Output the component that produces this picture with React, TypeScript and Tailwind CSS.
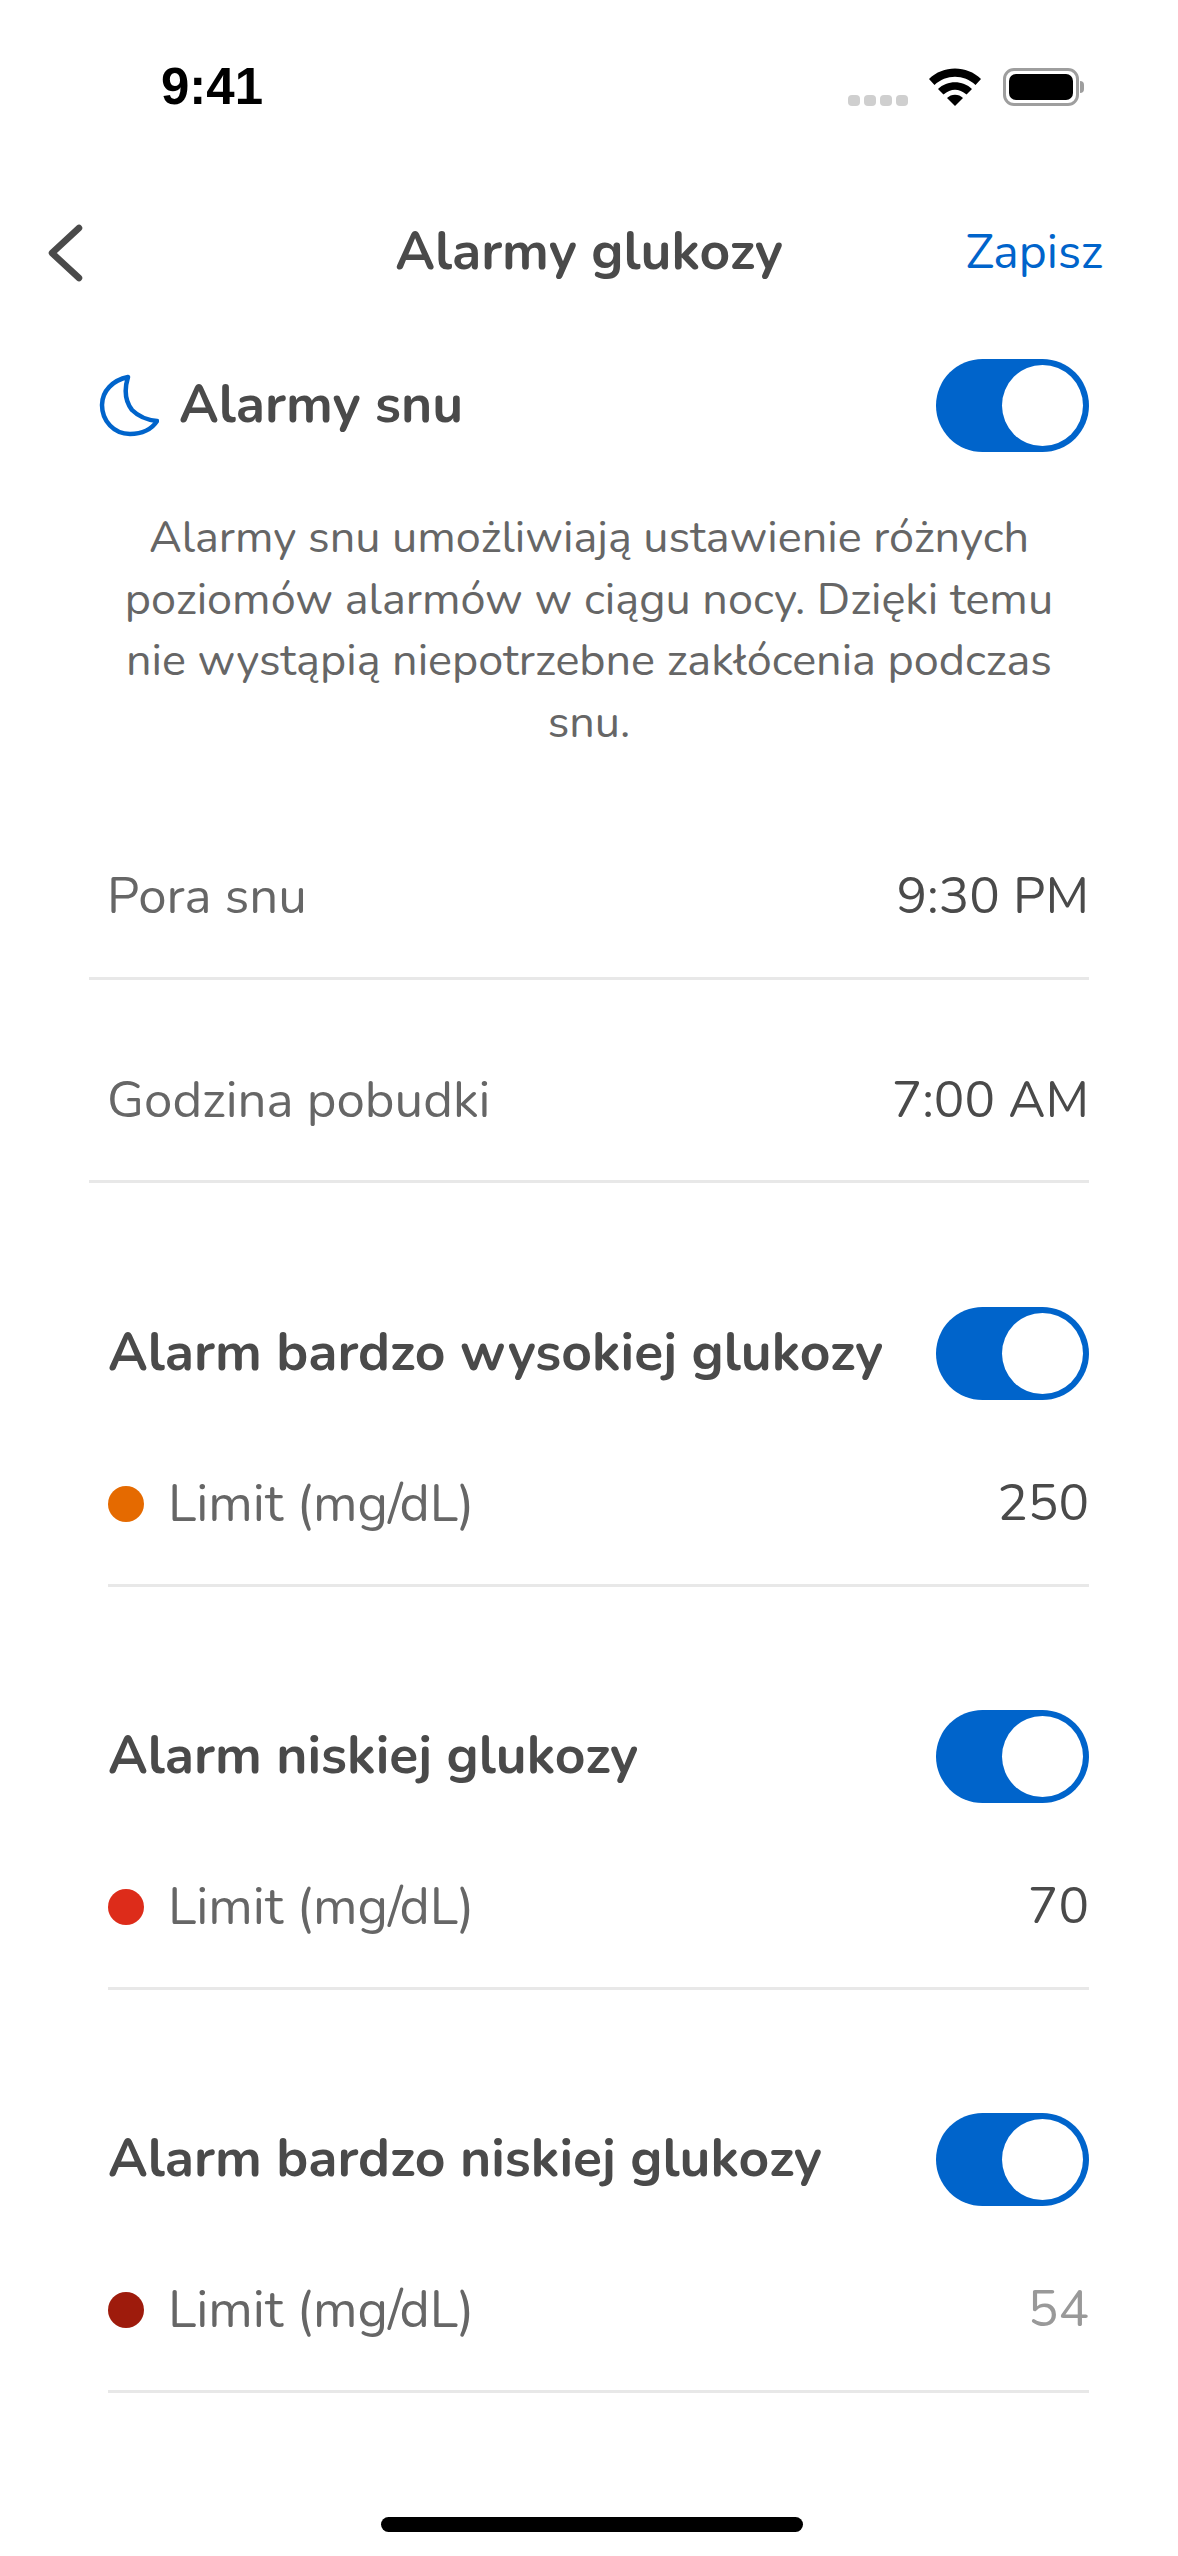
import React from "react";

const Toggle = () => (
  <div className="flex h-[93px] w-[153px] shrink-0 items-center justify-end rounded-full bg-[#0064cb] pr-[6px]">
    <div className="h-[81px] w-[81px] rounded-full bg-white" />
  </div>
);

const Moon = () => (
  <svg width="60" height="64" viewBox="0 0 60 64" fill="none" className="shrink-0">
    <path
      d="M29 4C25 17 26 28 33 37C39 43 48 47 58 48C53 56 43 61 31 61C15 61 3 48 3 32C3 18 14 7 29 4Z"
      stroke="#0064cb"
      strokeWidth="4.5"
      strokeLinejoin="round"
    />
  </svg>
);

const TimeRow = ({ label, value, mt }: { label: string; value: string; mt: string }) => (
  <div className={`flex h-[65px] items-center justify-between pl-[18px] ${mt}`}>
    <span className="text-[51px] text-[#666666]">{label}</span>
    <span className="text-[51px] text-[#4a4a4a]">{value}</span>
  </div>
);

const alarms = [
  { name: "Alarm bardzo wysokiej glukozy", dot: "bg-[#e56a00]", value: "250", valueClass: "text-[#4a4a4a]" },
  { name: "Alarm niskiej glukozy", dot: "bg-[#dd2c1a]", value: "70", valueClass: "text-[#4a4a4a]" },
  { name: "Alarm bardzo niskiej glukozy", dot: "bg-[#9e1b0c]", value: "54", valueClass: "text-[#999999]" },
];

export default function App() {
  return (
    <div className="relative h-[2556px] w-[1178px] overflow-hidden bg-white font-['Nunito','Lato','Noto_Sans',sans-serif]">
      {/* status bar */}
      <div className="flex h-[174px] items-start justify-between pl-[161px] pr-[94px] pt-[58px]">
        <span className="font-['Liberation_Sans',sans-serif] text-[51px] font-bold leading-[58px] text-black">9:41</span>
        <div className="mt-[10px] flex items-start">
          <div className="mt-[27px] flex gap-[4px]">
            <span className="h-[11px] w-[12px] rounded-[4px] bg-[#cfcfcf]" />
            <span className="h-[11px] w-[12px] rounded-[4px] bg-[#cfcfcf]" />
            <span className="h-[11px] w-[12px] rounded-[4px] bg-[#cfcfcf]" />
            <span className="h-[11px] w-[12px] rounded-[4px] bg-[#cfcfcf]" />
          </div>
          <svg width="52" height="38" viewBox="0 0 52 38" className="ml-[21px]">
            <path d="M0 11C14-3 38-3 52 11L46.500 17C35 6 17 6 5.500 17Z" fill="#000" />
            <path d="M9 21C18 12 34 12 43 21L37.500 26.500C30 20 22 20 14.500 26.500Z" fill="#000" />
            <path d="M18 30C22 25.500 30 25.500 34 30L26 38Z" fill="#000" />
          </svg>
          <div className="ml-[22px] flex items-center">
            <div className="flex h-[38px] w-[76px] items-center justify-center rounded-[11px] border-[3px] border-[#9e9e9e] bg-white">
              <div className="h-[26px] w-[64px] rounded-[7px] bg-black" />
            </div>
            <div className="ml-[1px] h-[12px] w-[4px] rounded-r-full bg-[#9e9e9e]" />
          </div>
        </div>
      </div>

      {/* nav */}
      <div className="relative flex h-[156px] items-center justify-center">
        <svg width="36" height="58" viewBox="0 0 36 58" fill="none" className="absolute left-[47px] top-[50px]">
          <path d="M32 4L5 29L32 54" stroke="#4a4a4a" strokeWidth="6.500" strokeLinecap="round" strokeLinejoin="round" />
        </svg>
        <span className="text-[53.400px] font-bold text-[#4a4a4a]">Alarmy glukozy</span>
        <span className="absolute right-[75px] text-[48px] text-[#0064cb]">Zapisz</span>
      </div>

      <div className="px-[89px]">
        <div className="mt-[29px] flex h-[93px] items-center justify-between">
          <div className="flex items-center gap-[20px] pl-[10px]">
            <Moon />
            <span className="text-[53.400px] font-bold text-[#4a4a4a]">Alarmy snu</span>
          </div>
          <Toggle />
        </div>

        <p className="mt-[55px] text-center text-[45px] leading-[61.500px] text-[#666666]">
          Alarmy snu umożliwiają ustawienie różnych
          <br />
          poziomów alarmów w ciągu nocy. Dzięki temu
          <br />
          nie wystąpią niepotrzebne zakłócenia podczas
          <br />
          snu.
        </p>

        <TimeRow label="Pora snu" value="9:30 PM" mt="mt-[111px]" />
        <div className="mt-[48px] h-[3px] bg-[#e8e8e8]" />
        <TimeRow label="Godzina pobudki" value="7:00 AM" mt="mt-[88px]" />
        <div className="mt-[47px] h-[3px] bg-[#e8e8e8]" />

        <div className="pl-[19px]">
          {alarms.map((a, i) => (
            <div key={a.name} className={i === 0 ? "mt-[124px]" : "mt-[123px]"}>
              <div className="flex h-[93px] items-center justify-between">
                <span className="text-[53.400px] font-bold text-[#4a4a4a]">{a.name}</span>
                <Toggle />
              </div>
              <div className="mt-[71px] flex h-[65px] items-center justify-between">
                <div className="flex items-center gap-[24px]">
                  <span className={`h-[36px] w-[36px] rounded-full ${a.dot}`} />
                  <span className="text-[52px] text-[#666666]">Limit (mg/dL)</span>
                </div>
                <span className={`text-[51px] ${a.valueClass}`}>{a.value}</span>
              </div>
              <div className="mt-[48px] h-[3px] bg-[#e8e8e8]" />
            </div>
          ))}
        </div>
      </div>

      {/* home indicator */}
      <div className="absolute bottom-[24px] left-[381px] h-[15px] w-[422px] rounded-full bg-black" />
    </div>
  );
}
